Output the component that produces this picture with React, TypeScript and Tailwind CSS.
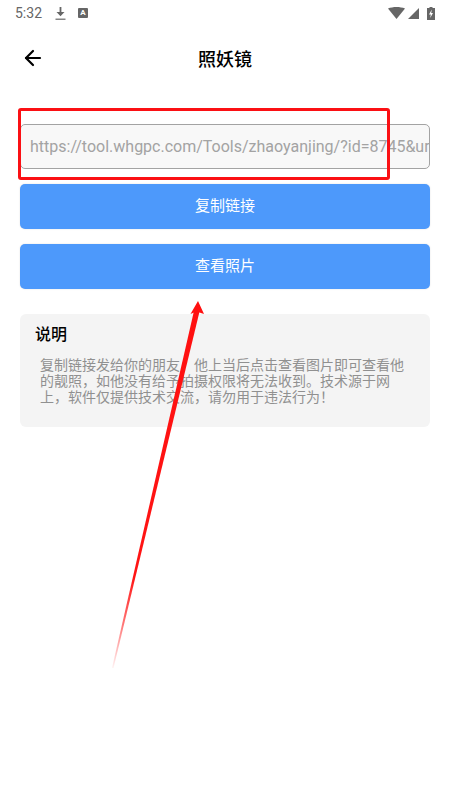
import { ArrowLeft } from "lucide-react";

const cjk = "font-['Roboto','Noto_Sans_CJK_SC',sans-serif]";

function StatusBar() {
  return (
    <div className="flex h-[26px] items-center justify-between pl-[15px] pr-[15px] text-[#666666]">
      <div className="flex items-center">
        <span className="text-[14px] font-['Roboto',sans-serif] leading-none">5:32</span>
        <svg width="11" height="13" viewBox="0 0 11 13" className="ml-[13px]">
          <path d="M4.6 0H6.4V5H9.5L5.5 9.2L1.5 5H4.6Z" fill="#666666" />
          <path d="M0.5 11.6H10.5V12.8H0.5Z" fill="#666666" />
        </svg>
        <span className="ml-[12px] flex h-[10px] w-[10px] items-center justify-center rounded-[1px] bg-[#666666] text-[8px] font-bold leading-none text-white font-['Roboto',sans-serif]">
          A
        </span>
      </div>
      <div className="flex items-center gap-[3px]">
        <svg width="17" height="12" viewBox="0 0 17 12">
          <path d="M0 1.5C5 -0.5 12 -0.5 17 1.5L8.5 12Z" fill="#666666" />
        </svg>
        <svg width="11" height="11" viewBox="0 0 11 11">
          <path d="M11 0V11H0Z" fill="#666666" />
        </svg>
        <svg width="8" height="13" viewBox="0 0 8 13" className="ml-[5px]">
          <path d="M2.5 0H5.5V1H8V13H0V1H2.5Z" fill="#666666" />
          <path d="M4.8 2.5L2 7.5H3.8L3.2 11L6 6H4.2Z" fill="#ffffff" />
        </svg>
      </div>
    </div>
  );
}

function Annotations() {
  return (
    <>
      <div className="absolute left-[18px] top-[108px] h-[72px] w-[372px] rounded-[3px] border-[3px] border-[#fb1014]" />
      <svg className="absolute left-0 top-0" width="450" height="800" viewBox="0 0 450 800">
        <defs>
          <linearGradient id="tail" gradientUnits="userSpaceOnUse" x1="112" y1="668" x2="197" y2="305">
            <stop offset="0" stopColor="#ff1c1c" stopOpacity="0.05" />
            <stop offset="0.12" stopColor="#ff1c1c" stopOpacity="0.6" />
            <stop offset="0.25" stopColor="#ff1414" />
            <stop offset="1" stopColor="#ff1010" />
          </linearGradient>
        </defs>
        <path d="M112 668L194.2 310L199.6 311.2L113.5 668Z" fill="url(#tail)" />
        <path d="M198 301L190.5 314L196.5 311.5L204 314Z" fill="#ff1010" />
      </svg>
    </>
  );
}

export default function App() {
  return (
    <div className={`relative h-[800px] w-[450px] overflow-hidden bg-white ${cjk}`}>
      <StatusBar />
      <div className="relative flex h-[64px] items-center justify-center">
        <ArrowLeft size={24} strokeWidth={2.2} className="absolute left-[21px] text-black" />
        <h1 className="pt-[2px] text-[18px] font-medium text-black">照妖镜</h1>
      </div>
      <div className="flex flex-col px-[20px] pt-[34px]">
        <div className="flex h-[45px] items-center overflow-hidden whitespace-nowrap rounded-[5px] border-[1.5px] border-[#a3a3a3] bg-[#f8f8f8] pl-[9px] text-[16px] text-[#a3a3a3]">
          https://tool.whgpc.com/Tools/zhaoyanjing/?id=8745&amp;url=
        </div>
        <button className="mt-[15px] flex h-[45px] items-center justify-center rounded-[5px] bg-[#4d99fb] text-[15px] text-white shadow-[0_0_2px_rgba(0,0,0,0.12)]">
          复制链接
        </button>
        <button className="mt-[15px] flex h-[45px] items-center justify-center rounded-[5px] bg-[#4d99fb] text-[15px] text-white shadow-[0_0_2px_rgba(0,0,0,0.12)]">
          查看照片
        </button>
        <div className="mt-[25px] h-[113px] rounded-[6px] bg-[#f4f4f4] pl-[16px] pr-[20px] pt-[10px]">
          <h2 className="-ml-[1px] text-[16px] font-medium leading-[22px] text-black">说明</h2>
          <p className="mt-[11px] pl-[4px] text-[14px] leading-[16px] text-[#909090]">
            复制链接发给你的朋友，他上当后点击查看图片即可查看他的靓照，如他没有给予拍摄权限将无法收到。技术源于网上，软件仅提供技术交流，请勿用于违法行为！
          </p>
        </div>
      </div>
      <Annotations />
    </div>
  );
}
